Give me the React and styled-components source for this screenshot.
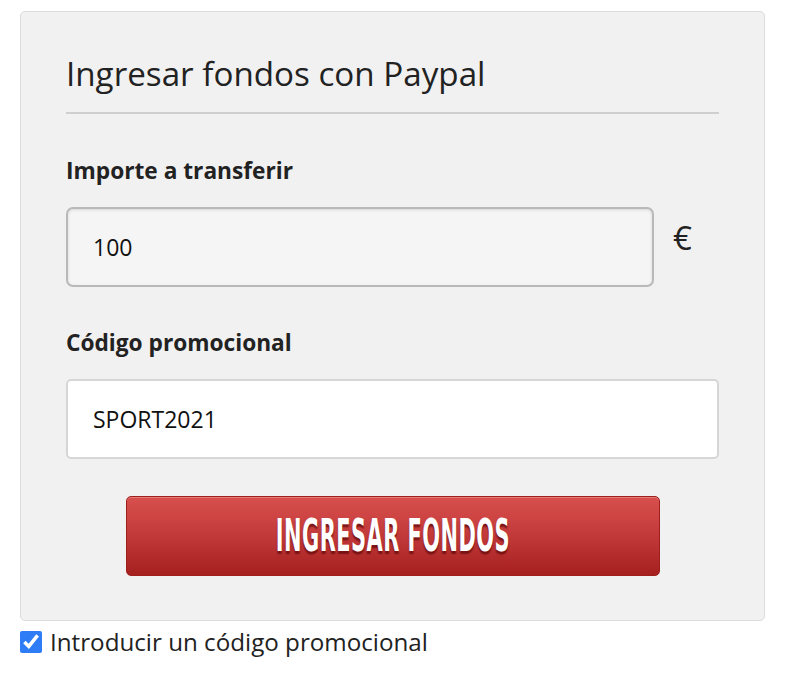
import React, { useState } from "react";
import styled, { createGlobalStyle } from "styled-components";

const GlobalStyle = createGlobalStyle`
  html, body {
    margin: 0;
    padding: 0;
    background: #ffffff;
    font-family: "Open Sans", "Noto Sans", Arial, sans-serif;
    color: #222;
  }
`;

const Page = styled.div`
  width: 745px;
  padding: 11px 0 0 20px;
`;

const Panel = styled.div`
  background: #f1f1f1;
  border: 1px solid #dcdcdc;
  border-radius: 5px;
  padding: 40px 45px 44px 45px;
  display: flex;
  flex-direction: column;
`;

const Title = styled.h2`
  margin: 0;
  font-size: 33.2px;
  font-weight: 400;
  line-height: 44px;
  color: #222;
  padding-bottom: 16px;
  border-bottom: 2px solid #cfcfcf;
`;

const Field = styled.div`
  display: flex;
  flex-direction: column;
  margin-top: ${({ $top }) => $top}px;
`;

const Label = styled.label`
  font-size: 22.7px;
  font-weight: 700;
  line-height: 28px;
  color: #222;
  margin-bottom: 22px;
`;

const InputRow = styled.div`
  display: flex;
  align-items: flex-start;
  gap: 19px;
`;

const Input = styled.input`
  box-sizing: border-box;
  width: ${({ $width }) => $width};
  height: 80px;
  padding: 0 25px;
  font-family: "Open Sans", "Noto Sans", sans-serif;
  font-size: 23px;
  color: #111;
  border-radius: ${({ $muted }) => ($muted ? "7px" : "5px")};
  border: 2px solid ${({ $muted }) => ($muted ? "#b9b9b9" : "#d6d6d6")};
  background: ${({ $muted }) => ($muted ? "#f5f5f5" : "#ffffff")};
  box-shadow: ${({ $muted }) =>
    $muted ? "inset 0 1px 3px rgba(0,0,0,0.12)" : "none"};
  outline: none;
`;

const Currency = styled.span`
  font-size: 33px;
  line-height: 40px;
  margin-top: 11px;
  color: #222;
`;

const SubmitButton = styled.button`
  align-self: center;
  width: 534px;
  height: 80px;
  margin-top: 37px;
  padding: 0;
  border: 1px solid #9e1f1c;
  border-radius: 5px;
  background: linear-gradient(to bottom, #d8504d 0%, #c2393a 50%, #a5201e 100%);
  box-shadow: inset 0 1px 0 rgba(255, 255, 255, 0.25);
  cursor: pointer;
`;

const ButtonText = styled.span`
  display: inline-block;
  transform: scaleX(0.465);
  color: #ffffff;
  font-family: "DejaVu Sans", "Liberation Sans", sans-serif;
  font-weight: 700;
  font-size: 45px;
  line-height: 50px;
  letter-spacing: 1px;
  text-transform: uppercase;
  text-shadow: 0 3px 2px rgba(100, 10, 10, 0.75);
  white-space: nowrap;
`;

const CheckRow = styled.label`
  display: flex;
  align-items: center;
  gap: 8px;
  margin-top: 6px;
  font-size: 24.2px;
  line-height: 30px;
  color: #222;
`;

const Check = styled.input`
  width: 22px;
  height: 22px;
  margin: 0;
  accent-color: #2f7df6;
`;

export default function App() {
  const [amount, setAmount] = useState("100");
  const [code, setCode] = useState("SPORT2021");
  const [promo, setPromo] = useState(true);

  return (
    <Page>
      <GlobalStyle />
      <Panel>
        <Title>Ingresar fondos con Paypal</Title>
        <Field $top={43}>
          <Label>Importe a transferir</Label>
          <InputRow>
            <Input
              $muted
              $width="588px"
              value={amount}
              onChange={(e) => setAmount(e.target.value)}
            />
            <Currency>€</Currency>
          </InputRow>
        </Field>
        <Field $top={42}>
          <Label>Código promocional</Label>
          <InputRow>
            <Input
              $width="100%"
              value={code}
              onChange={(e) => setCode(e.target.value)}
            />
          </InputRow>
        </Field>
        <SubmitButton>
          <ButtonText>Ingresar fondos</ButtonText>
        </SubmitButton>
      </Panel>
      <CheckRow>
        <Check
          type="checkbox"
          checked={promo}
          onChange={(e) => setPromo(e.target.checked)}
        />
        Introducir un código promocional
      </CheckRow>
    </Page>
  );
}
